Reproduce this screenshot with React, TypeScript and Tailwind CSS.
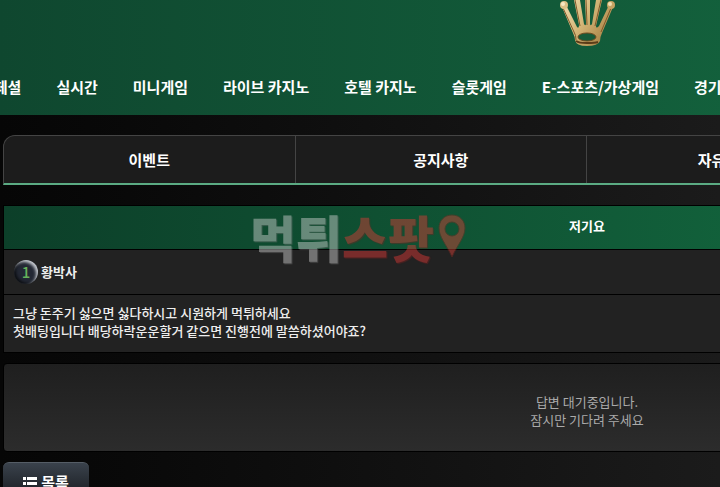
import React from "react";

const menu = ["스페셜", "실시간", "미니게임", "라이브 카지노", "호텔 카지노", "슬롯게임", "E-스포츠/가상게임", "경기결과"];
const tabs = ["이벤트", "공지사항", "자유게시판", "고객센터"];

function Crown() {
  return (
    <svg className="block h-12 w-14" viewBox="0 0 56 48" role="img" aria-label="Crown">
      <defs>
        <linearGradient id="gold" x1="0" y1="0" x2="1" y2="0.6">
          <stop offset="0" stopColor="#f0dcae" />
          <stop offset="0.5" stopColor="#d5b779" />
          <stop offset="1" stopColor="#a98446" />
        </linearGradient>
      </defs>
      <path d="M3 7L7 5L18 27Q20 29 20 25L15 0H21L25 24Q27 27 27 23L26 0H31L31 23Q31 27 33 24L37 0H43L37 26Q37 29 40 26L50 5L54 7L43 33Q41 37 41 41Q39 46 28 46Q17 46 16 40Q16 37 14 33Z" fill="url(#gold)" />
      <path d="M4 8L15 32Q17 35 17 40M16 0L21 26M27 0L28 25M42 0L36 26M52 8L42 32" stroke="#80592a" strokeWidth="1" fill="none" />
      <circle cx="5" cy="5" r="4" fill="#dcc086" />
      <circle cx="4" cy="4" r="2" fill="#f6e8c4" />
      <circle cx="52" cy="5" r="4" fill="#c5a362" />
      <circle cx="51" cy="4" r="2" fill="#efddb2" />
      <ellipse cx="28" cy="37" rx="9" ry="4" fill="#155b39" stroke="#6d4a1f" />
      <path d="M17 41Q20 43 28 43Q36 43 39 42" stroke="#5b3c18" strokeWidth="2" fill="none" />
    </svg>
  );
}

function Watermark() {
  return (
    <div className="pointer-events-none absolute top-0 left-[246px] flex items-center opacity-45" aria-hidden="true">
      <span className="text-[50px] leading-[60px] font-black text-[#d4d4d4] [text-shadow:1px_1px_1px_#777]">먹튀</span>
      <span className="text-[50px] leading-[60px] font-black text-[#e23a36] [text-shadow:1px_1px_1px_#802020]">스팟</span>
      <svg className="ml-1 h-11 w-7" viewBox="0 0 28 44">
        <path fillRule="evenodd" d="M14 1C6 1 1 7 1 14C1 23 8 30 14 43C20 30 27 23 27 14C27 7 22 1 14 1ZM14 8A7 7 0 1 1 14 22A7 7 0 1 1 14 8Z" fill="#dd4038" stroke="#822820" />
      </svg>
    </div>
  );
}

export default function App() {
  return (
    <div className="h-screen overflow-hidden bg-linear-to-r from-[#060606] to-[#1b1b1b] font-['Noto_Sans_CJK_KR','Noto_Sans',sans-serif] text-white">
      <div className="min-w-[1174px]">
        <header className="bg-linear-to-r from-[#0f472f] to-[#157044]">
          <div className="flex h-[60px] items-start justify-center">
            <Crown />
          </div>
          <nav className="-ml-5 flex h-[55px] gap-[35px]">
            {menu.map((item) => (
              <a key={item} href="#" className="text-[15px] leading-[54px] font-bold whitespace-nowrap">{item}</a>
            ))}
          </nav>
        </header>
        <main className="px-[3px] pt-5">
          <nav className="grid h-[50px] grid-cols-4 overflow-hidden rounded-t-xl border border-b-2 border-[#444] border-b-[#5bab83] bg-[#1c1c1c]">
            {tabs.map((tab) => (
              <a key={tab} href="#" className="border-r border-[#444] text-center text-[15px] leading-[48px] font-bold">{tab}</a>
            ))}
          </nav>
          <article className="relative mt-5 border border-black bg-[#222] text-[13px] leading-[18px] font-bold">
            <h1 className="h-[43px] bg-linear-to-r from-[#0c3f29] to-[#157646] text-center leading-[40px]">저기요</h1>
            <div className="flex h-[46px] items-center gap-[3px] border-y border-black px-[10px]">
              <span className="flex size-6 items-center justify-center rounded-full bg-[#232834] text-[15px] font-medium text-[#65b35b] shadow-[inset_-2px_2px_3px_#c4c8ce,inset_2px_-1px_3px_#0c0e12]">1</span>
              <span className="text-[#eee]">황박사</span>
            </div>
            <p className="px-[9px] pt-[9px] pb-3 font-medium text-[#eee]">
              그냥 돈주기 싫으면 싫다하시고 시원하게 먹튀하세요<br />
              첫배팅입니다 배당하락운운할거 같으면 진행전에 말씀하셨어야죠?
            </p>
            <Watermark />
          </article>
          <section className="mt-[10px] rounded-sm border border-black bg-linear-to-b from-[#1f1f1f] to-[#2c2c2c] pt-[29px] pb-[22px] text-center text-[13px] leading-[18px] text-[#aaa]">
            답변 대기중입니다.<br />잠시만 기다려 주세요
          </section>
          <button className="mt-[10px] flex h-10 w-[86px] items-center justify-center gap-1 rounded-t-md border-t border-[#555d66] bg-linear-to-b from-[#3a424c] to-[#15181c] text-[15px] font-bold">
            <svg className="size-[14px]" viewBox="0 0 14 14" fill="currentColor" aria-hidden="true">
              <path d="M0 1h3v3H0zM4 1h10v3H4zM0 6h3v3H0zM4 6h10v3H4zM0 11h3v3H0zM4 11h10v3H4z" />
            </svg>
            목록
          </button>
        </main>
      </div>
    </div>
  );
}
